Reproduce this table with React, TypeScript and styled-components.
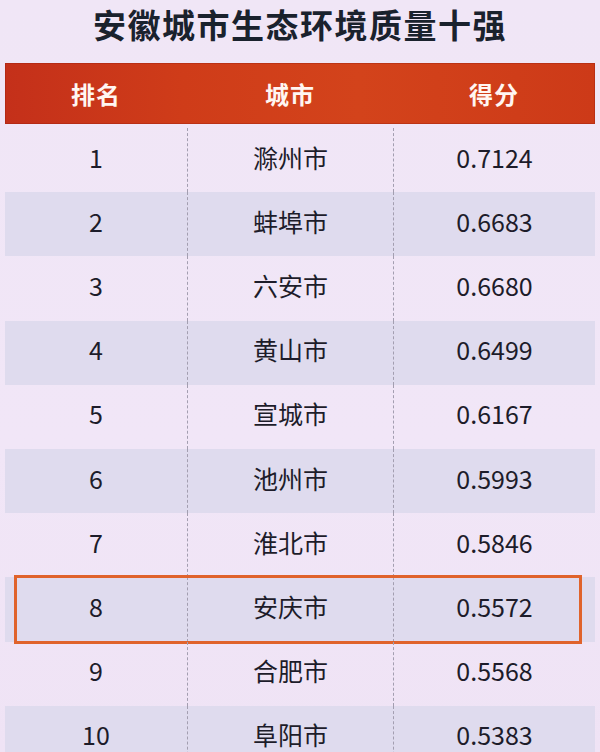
import styled, { createGlobalStyle } from 'styled-components';

type Item = {
  rank: number;
  city: string;
  score: string;
};

const items: Item[] = [
  { rank: 1, city: '滁州市', score: '0.7124' },
  { rank: 2, city: '蚌埠市', score: '0.6683' },
  { rank: 3, city: '六安市', score: '0.6680' },
  { rank: 4, city: '黄山市', score: '0.6499' },
  { rank: 5, city: '宣城市', score: '0.6167' },
  { rank: 6, city: '池州市', score: '0.5993' },
  { rank: 7, city: '淮北市', score: '0.5846' },
  { rank: 8, city: '安庆市', score: '0.5572' },
  { rank: 9, city: '合肥市', score: '0.5568' },
  { rank: 10, city: '阜阳市', score: '0.5383' },
];

const HIGHLIGHT_RANK = 8;

const App = () => {
  return (
    <>
      <GlobalStyle />
      <Page>
        <Title>安徽城市生态环境质量十强</Title>
        <HeaderBar>
          <HeaderCell>排名</HeaderCell>
          <HeaderCell>城市</HeaderCell>
          <HeaderCell>得分</HeaderCell>
        </HeaderBar>
        <Body>
          {items.map((item) => (
            <Row
              key={item.rank}
              $shaded={item.rank % 2 === 0}
              $highlight={item.rank === HIGHLIGHT_RANK}
            >
              <Cell>{item.rank}</Cell>
              <Cell $divider>{item.city}</Cell>
              <Cell $divider>{item.score}</Cell>
            </Row>
          ))}
        </Body>
      </Page>
    </>
  );
};

const GlobalStyle = createGlobalStyle`
  html, body {
    margin: 0;
    padding: 0;
    background: #efe5f5;
  }
  body {
    font-family: "Noto Sans CJK SC", "Noto Sans", sans-serif;
  }
`;

const Page = styled.div`
  width: 600px;
  height: 752px;
  overflow: hidden;
  box-sizing: border-box;
  padding: 0 5px;
  background: linear-gradient(180deg, #f0e6f6 0%, #f1e6f7 60%, #efe3f5 100%);
`;

const Title = styled.h1`
  margin: 0 0 15px;
  height: 48px;
  line-height: 48px;
  text-align: center;
  font-size: 33px;
  font-weight: 700;
  letter-spacing: 1.5px;
  color: #1a222d;
`;

const HeaderBar = styled.div`
  display: grid;
  grid-template-columns: 182px 206px 1fr;
  height: 61px;
  align-items: center;
  background: linear-gradient(90deg, #c4301a 0%, #cf3c19 30%, #d3431b 60%, #cd3a18 100%);
  box-shadow: inset 0 0 0 1px rgba(150, 30, 15, 0.35);
`;

const HeaderCell = styled.div`
  text-align: center;
  font-size: 24px;
  font-weight: 700;
  color: #fff6f2;
  letter-spacing: 1px;
`;

const Body = styled.div`
  margin-top: 4px;
  display: flex;
  flex-direction: column;
`;

const Row = styled.div<{ $shaded: boolean; $highlight: boolean }>`
  position: relative;
  display: grid;
  grid-template-columns: 182px 206px 1fr;
  height: 64.2px;
  align-items: stretch;
  background: ${({ $shaded }) => ($shaded ? '#dfdbee' : 'transparent')};

  &::after {
    content: ${({ $highlight }) => ($highlight ? "''" : 'none')};
    position: absolute;
    top: -2px;
    bottom: -2px;
    left: 9px;
    right: 13px;
    border: 3px solid #e0632c;
    pointer-events: none;
  }
`;

const Cell = styled.div<{ $divider?: boolean }>`
  display: flex;
  align-items: center;
  justify-content: center;
  padding-bottom: 7px;
  font-size: 25px;
  color: #1d1c2a;
  border-left: ${({ $divider }) => ($divider ? '1px dashed #a39eb0' : 'none')};
`;

export default App;
